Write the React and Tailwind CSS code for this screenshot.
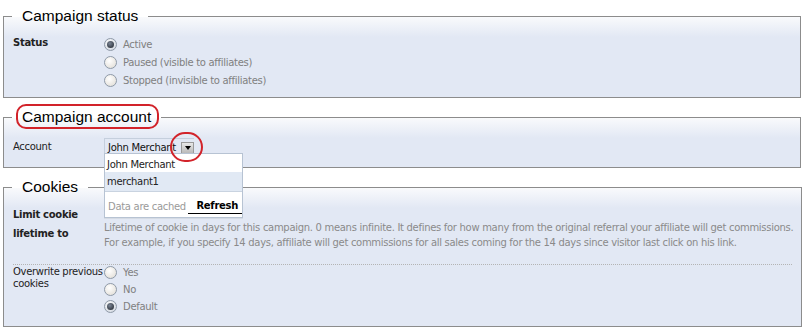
import React from 'react'

const ui = { fontFamily: '"DejaVu Sans", Verdana, sans-serif' }
const head = { fontFamily: '"Liberation Sans", Arial, sans-serif' }

function Radio({ checked, label, tight }) {
  return (
    <div className={(tight ? 'h-[17px]' : 'h-[18px]') + ' flex items-center gap-[6px]'}>
      <span
        className={
          'flex h-[13px] w-[13px] items-center justify-center rounded-full border border-[#8f9aa8] ' +
          (checked
            ? 'bg-[radial-gradient(circle_at_40%_35%,#ffffff,#c9d0da)]'
            : 'bg-[radial-gradient(circle_at_40%_35%,#ffffff,#dedad2)]')
        }
      >
        {checked && <span className="h-[7px] w-[7px] rounded-full bg-[radial-gradient(circle_at_40%_35%,#7a8494,#1d2229)]" />}
      </span>
      <span className="text-[#808080]">{label}</span>
    </div>
  )
}

function Box({ title, className, children }) {
  return (
    <fieldset
      className={
        'ml-[3px] mr-[2px] border border-[#8c8c8c] bg-[linear-gradient(to_bottom,#f9fafc,#e2e8f4_20px)] pl-[9px] pr-2 ' +
        className
      }
    >
      <legend className="ml-[-1px] px-[10px] text-[15.5px] leading-[22px] tracking-normal text-black" style={head}>
        {title}
      </legend>
      {children}
    </fieldset>
  )
}

export default function App() {
  return (
    <div
      className="relative h-[331px] w-[803px] overflow-hidden bg-white pt-[5px] text-[10px] tracking-[-0.3px] text-[#333]"
      style={ui}
    >
      {/* status */}
      <Box title="Campaign status" className="h-[93px]">
        <div className="grid grid-cols-[91px_1fr] pt-[8px]">
          <div className="font-bold text-[#222]">Status</div>
          <div>
            <Radio checked label="Active" />
            <Radio label="Paused (visible to affiliates)" />
            <Radio label="Stopped (invisible to affiliates)" />
          </div>
        </div>
      </Box>

      {/* account */}
      <Box title="Campaign account" className="mt-[8px] h-[62px]">
        <div className="grid grid-cols-[91px_1fr] items-center pt-[10px]">
          <div className="text-[#222]">Account</div>
          <div className="flex h-[17px] w-[90px] items-center justify-between border-l border-t border-[#c5cfdd] pl-[3px] text-[#111]">
            <span>John Merchant</span>
            <span className="mb-[-2px] flex h-[12px] w-[13px] items-center justify-center border border-[#9a9a9a] bg-[linear-gradient(to_bottom,#e8e8e8,#b9b9b9)]">
              <span className="h-0 w-0 border-x-[3px] border-t-[4px] border-x-transparent border-t-black" />
            </span>
          </div>
        </div>
      </Box>

      {/* cookies */}
      <Box title="Cookies" className="mt-[8px] h-[151px]">
        <div className="grid grid-cols-[91px_1fr] pt-[7px]">
          <div className="font-bold leading-[19px] text-[#222]">
            Limit cookie
            <br />
            lifetime to
          </div>
          <div className="whitespace-nowrap pt-[15px] leading-[15px] text-[#8a8a8a]">
            Lifetime of cookie in days for this campaign. 0 means infinite. It defines for how many from the original referral your affiliate will get commissions.
            <br />
            For example, if you specify 14 days, affiliate will get commissions for all sales coming for the 14 days since visitor last click on his link.
          </div>
        </div>
        <div className="mt-[14px] mr-[1px] border-t border-dotted border-[#b4b4b4]" />
        <div className="grid grid-cols-[91px_1fr]">
          <div className="whitespace-nowrap pt-[1px] leading-[12px] text-[#222]">
            Overwrite previous
            <br />
            cookies
          </div>
          <div className="-mt-px">
            <Radio tight label="Yes" />
            <Radio tight label="No" />
            <Radio tight checked label="Default" />
          </div>
        </div>
      </Box>

      {/* open account list */}
      <div className="absolute left-[104px] top-[153px] w-[139px] border border-[#b7c3d3] bg-white text-[#222] shadow-[0_1px_0_#d5dbe4]">
        <div className="flex h-[18px] items-center px-[2px] pt-[2px]">John Merchant</div>
        <div className="flex h-[19px] items-center bg-[#e1e9f4] px-[2px]">merchant1</div>
        <div className="flex h-[26px] items-end justify-between whitespace-nowrap border-t border-[#c9d3e0] pb-[3px] pl-[3px]">
          <span className="text-[#9a9a9a]">Data are cached</span>
          <span className="border-b border-black pl-[8px] pr-[4px] font-bold text-black">Refresh</span>
        </div>
      </div>

      {/* red marks */}
      <div className="pointer-events-none absolute left-[16px] top-[104px] h-[25px] w-[143px] rounded-[10px] border-2 border-[#d2232a]" />
      <div className="pointer-events-none absolute left-[170px] top-[132px] h-[30px] w-[33px] rounded-full border-2 border-[#d2232a]" />
    </div>
  )
}
